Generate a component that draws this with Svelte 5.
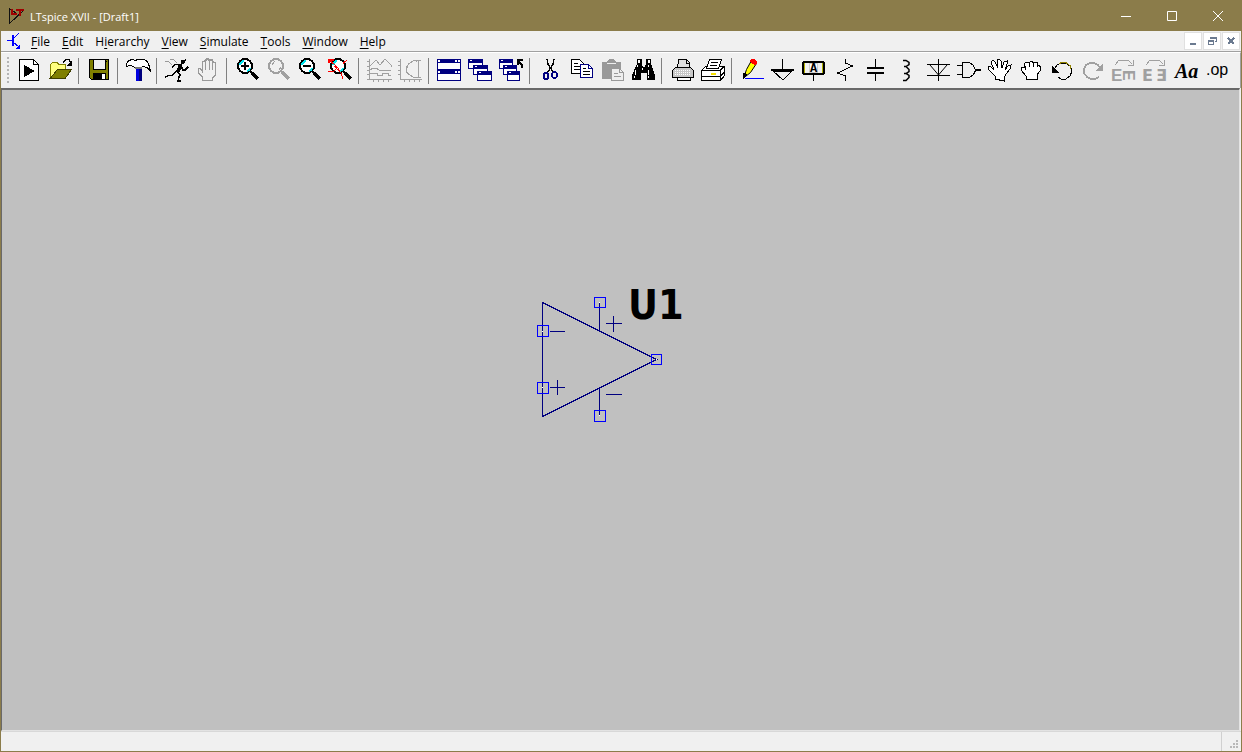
<script>
    const menus = [
        ['F', 'ile', ''],
        ['E', 'dit', ''],
        ['i', 'erarchy', 'H'],
        ['V', 'iew', ''],
        ['S', 'imulate', ''],
        ['T', 'ools', ''],
        ['W', 'indow', ''],
        ['H', 'elp', '']
    ];

    const glass = '<circle cx="13" cy="13" r="7" fill="#fff" stroke-width="2"/><path d="M8 12a5 5 0 0 1 4-4M18 15a5 5 0 0 1-3 3" stroke="#00e5ee" stroke-width="2"/><path d="m18 18 2 2" stroke-width="2"/><path d="m20 20 6 6" stroke-width="4"/>';
    const win = (x, y, w, h) =>
        `<rect x="${x}.5" y="${y}.5" width="${w}" height="${h}" fill="#fff" stroke="#000080"/><path d="M${x} ${y + 2}h${w + 1}" stroke="#000080" stroke-width="4"/><path d="M${x + 1} ${y + 2}h2M${x + w - 5} ${y + 2}h2M${x + w - 2} ${y + 2}h2" stroke="#fff" stroke-width="2"/>`;
    const smallWin = (x, y, w, h) =>
        `<rect x="${x}.5" y="${y}.5" width="${w}" height="${h}" fill="#fff" stroke="#000080"/><path d="M${x} ${y + 2}h${w + 1}" stroke="#000080" stroke-width="4"/><path d="M${x + 2} ${y + 1.5}h2" stroke="#fff"/>`;

    const icons = {
        'New schematic': '<path d="M5.500 6.500h14l5 5v16h-19z" fill="#fff"/><path d="M19.500 6.500v5h5"/><path d="m10 12 11 6-11 6z" fill="#000" stroke="none"/>',
        'Open': '<path d="M5.500 25V12l2-3h4l2 2h7v5" fill="#ffff80" stroke="#808000"/><path d="M12.500 16.500h14l-6 8.500h-15z" fill="#808000" stroke="#404000"/><path d="M18 9.500l3-3h3l2 4"/><path d="M27 7v6h-6z" fill="#000" stroke="none"/>',
        'Save': '<path d="M5.500 6.500h19v20h-17l-2-2z" fill="#808000"/><path d="M9.500 6.500h12v10h-12z" fill="#f0f0f0"/><path d="M9 20h13v7H9z" fill="#000" stroke="none"/><path d="M18 21h3v5h-3z" fill="#fff" stroke="none"/><path d="M22.500 8v1"/>',
        'Control panel': '<path d="M13 13h6v15h-6z" fill="#0000e0" stroke="none"/><path d="M17.500 13v15" stroke="#000080" stroke-width="3"/><path d="M3.500 10.500c3-5 6-4 9-3l2-1c5-1 9 0 11 4l1.500 6v1l-3-3-4-1-2 1h-6c-3-2-5-3-8-1z" fill="#fff"/><path d="M12 15h7" stroke="#777" stroke-width="2"/>',
        'Run': '<path d="M19 7h3l2-1-1 4-4 2z" fill="#000" stroke="none"/><path d="M17 11h3l-2 8h-4z" fill="#000" stroke="none"/><path d="m17 11.500-4 0-3 3M19 13l2 4 2 0 3-3M15 17l-5 5.500H7L3 24M15 18l3 4-1 2-1 4h3" stroke-width="1.500"/><path d="m8 6 4 1 3 3M3 8l4 1 3 3" stroke="#999"/>',
        'Halt': '<path d="M9.500 27.500v-3l-4-5v-4h2l2 3V9l2-1 1 1v8V8l1-2h2l1 2v9V8l1-1h2v10-7l1-1 2 1v12l-3 3v2.500z" fill="#f0f0f0" stroke="#999" stroke-width="1.500"/>',
        'Zoom in': glass + '<path d="M9 13h8M13 9v8" stroke-width="2"/>',
        'Pan': '<g stroke="#a0a0a0"><circle cx="13" cy="13" r="7" stroke-width="2"/><path d="M9 12l3-4M16 17l2-3" /><path d="M19 19l7 7" stroke-width="3"/></g>',
        'Zoom out': glass + '<path d="M9 13h8" stroke-width="2"/>',
        'Zoom to fit': glass + '<path d="M4 7l6 5 6 8 2 6M22 7l-7 6-6 5-6 1" stroke="#f00"/><path d="M3 7h6M4 6v4M10 13l4 4" stroke="#f00" stroke-width="2"/><path d="m11 17 7-7" stroke="#fff"/>',
        'Autorange': '<path d="M5.500 6v20.500h22M3 8.500h3M3 13.500h3M3 17.500h3M3 21.500h3M3 26.500h3M9.500 26v3M14.500 26v3M19.500 26v3M24.500 26v3M6 13l6-6 4 5 5-6 6 6v2M6 17l3-2h3l3 2h12M6 20.500h7v2h5v-2h6v2h3" stroke="#a0a0a0"/>',
        'FFT': '<path d="M5.500 6v20.500h21M3 8.500h3M3 12.500h3M3 17.500h3M3 21.500h3M9.500 26v3M14.500 26v3M19.500 26v3M24.500 26v3M23.500 7v18M26 7.500h-7l-5 3-3 4v4l3 3 5 3h7M21 9l2-2M13 13l-2 4 2 4" stroke="#a0a0a0"/>',
        'Tile windows': win(3, 6, 23, 10) + win(3, 17, 23, 10),
        'Cascade windows': smallWin(3, 6, 14, 9) + smallWin(8, 12, 14, 9) + smallWin(12, 18, 14, 9),
        'Close all': smallWin(3, 6, 13, 9) + smallWin(7, 12, 13, 9) + smallWin(11, 18, 12, 9) + '<path d="m22 8 4 4v3" stroke-width="1.500"/><path d="M21 6h6v2h-4v4h-2z" fill="#000" stroke="none"/>',
        'Cut': '<path d="m12 6 1 5 5 8M19 6l-1 5-5 8" stroke-width="1.500"/><g stroke="#000080" stroke-width="2"><ellipse cx="11" cy="23" rx="2.500" ry="3"/><ellipse cx="19.500" cy="22" rx="2.500" ry="3"/></g>',
        'Copy': '<path d="M5.500 6.500h8l4 4v10h-12z" fill="#fff"/><path d="M8 10.500h4M8 13.500h6M8 16.500h6"/><path d="M14.500 11.500h8l4 4v9h-12z" fill="#fff" stroke="#000080"/><path d="M22.500 11.500v4h4" stroke="#000080"/><path d="M17 15.500h3M17 18.500h7M17 21.500h7"/>',
        'Paste': '<path d="M5 9h5l2-3h5l2 3h5v17H5z" fill="#999" stroke="none"/><path d="M10 10.500h9" stroke="#eee"/><path d="M14.500 15.500h8l4 4v8h-12z" fill="#eee" stroke="#999"/><path d="M22.500 15.500v4h4M17 20.500h4M17 23.500h7" stroke="#999"/>',
        'Find': '<path d="M9 6h5v5l1 3h2l1-3V6h5v5l4 11v5h-8v-7h-6v7H4v-5l5-11z" fill="#000" stroke="none"/><path d="M10 7h2v3h-2zM20 7h2v3h-2zM9 12h1v2H9zM20 12h1v2h-1zM7 17h1v5H7zM20 17h1v5h-1zM14 15h1v2h-1zM6 23h1v2H6zM20 23h1v2h-1z" fill="#fff" stroke="none"/>',
        'Print': '<path d="m10.500 15.500 1-9h8l3 3v6" fill="#ddd"/><path d="M19.500 7v3h3"/><path d="M8.500 14.500h15l3 3v7h-21v-7z" fill="#c8c8c8"/><path d="M10.500 24.500h13v3h-13z" fill="#fff"/><path d="M8 17.500h16M8 19.500h16M8 21.500h16" stroke="#fff" stroke-dasharray="1 1"/>',
        'Print setup': '<path d="M3.500 17.500l4-4h19v9l-4 5h-19z" fill="#fff"/><path d="m8.500 15.500 3-9h12l-3 9z" fill="#fff"/><path d="M13 9.500h7M12 12.500h7"/><path d="M3 17.500h19.500v10M22 17.500l4-4M3 23.500h19.500l4-5"/><path d="M13 21h5" stroke="#f5e000" stroke-width="2"/>',
        'Draw wire': '<path d="m7.500 22.500 2-6 5-9 5 3-6 9-5 4z" fill="#ff0" shape-rendering="auto"/><path d="m14 6 3 0 3 2v3l-2 1-5-3z" fill="#f00" stroke="none"/><path d="M6 20h3l1 2-4 4z" fill="#000" stroke="none"/><path d="M8 25.500h19" stroke="#00f"/>',
        'Ground': '<path d="M14.500 6v11M15 27 5 18h19z"/><path d="M3 17h23" stroke-width="2"/>',
        'Label net': '<rect x="4" y="9" width="21" height="12" rx="2" stroke-width="2" fill="#f0f0f0"/><path d="M5.500 10v10M23.500 10v10" stroke="#b0b000"/><path d="M10.500 10.500h8v9h-8z" stroke="#ccc" fill="#fff"/><path d="M14.500 22v6"/><text x="14.500" y="19" font-family="Liberation Mono" font-weight="bold" font-size="12" text-anchor="middle" fill="#000" stroke="none">A</text>',
        'Resistor': '<path d="M15.500 6v4l7 3-15 7 8 3v5"/>',
        'Capacitor': '<path d="M14.500 6v9M14.500 21v7"/><path d="M6 15h17M6 20h17" stroke-width="2"/>',
        'Inductor': '<path d="M11 7.500h3l3 2v2l-3 2h-2 2l3 3v2l-3 2h-2 2l3 2v2l-3 3h-3" stroke-width="1.500" shape-rendering="auto"/>',
        'Diode': '<path d="M15.500 6v22M4 11.500h23M4 22.500h23"/><path d="M7 12l8.500 10L24 12" shape-rendering="auto"/>',
        'Component': '<path d="M3 12.500h5M3 21.500h5M8.500 9.500h7l4 3 2 5-2 4-4 3h-7z" fill="#f0f0f0"/><path d="M21 17h6" stroke-width="2"/>',
        'Move': '<path d="M10 26v-3l-6-6-1-3 2-1 4 4-3-8 2-2 2 2 3 6-1-8 2-1 2 2 1 7 2-6 3-1v3l-2 6 3-4 3-1-1 4-4 5-2 4v3z" fill="#fff"/>',
        'Drag': '<path d="M10 26v-3l-5-6 1-3h3l-1-3 2-2 3 1 2-2 3 2 3-1 1 3 3 2-1 4-3 4v4z" fill="#fff"/><path d="M9 13v4M13 10v4M17 10v4M21 11v3"/>',
        'Undo': '<path d="M8 15l2-3 4-2h5l4 3 2 5-2 5-4 3h-5l-3-2"/><path d="m12 10.500 3-1h4l4 3 1 3" stroke="#908000"/><path d="M5 12v8h7z" fill="#000" stroke="none"/>',
        'Redo': '<path d="M22 15l-2-3-4-2h-4l-4 2-2 4v4l3 4 4 2h4l4-2" stroke="#a0a0a0" stroke-width="1.500"/><path d="M25 10v8h-8z" fill="#a0a0a0" stroke="none"/>',
        'Rotate': '<g fill="#a0a0a0" stroke="none" font-family="Liberation Sans" font-weight="bold" font-size="17"><text x="2" y="28">E</text><text transform="translate(14 17) rotate(90)" x="0" y="0" font-size="16">E</text></g><path d="M6 12l4-5h9l4 4M24.500 7v5H19" stroke="#a0a0a0"/>',
        'Mirror': '<g fill="#a0a0a0" stroke="none" font-family="DejaVu Sans" font-weight="bold" font-size="16"><text x="2" y="28">E</text><text x="16" y="28">Ǝ</text></g><path d="M6 12l4-5h9l4 4M24.500 7v5H19" stroke="#a0a0a0"/>',
        'Text': '<text x="4" y="25" font-family="Liberation Serif" font-weight="bold" font-style="italic" font-size="20" fill="#000" stroke="none">Aa</text>',
        'SPICE directive': '<text x="4" y="22" font-family="Liberation Sans" font-size="16" fill="#000" stroke="none">.op</text>'
    };

    const groups = [
        ['New schematic', 'Open'],
        ['Save'],
        ['Control panel'],
        ['Run', 'Halt'],
        ['Zoom in', 'Pan', 'Zoom out', 'Zoom to fit'],
        ['Autorange', 'FFT'],
        ['Tile windows', 'Cascade windows', 'Close all'],
        ['Cut', 'Copy', 'Paste', 'Find'],
        ['Print', 'Print setup'],
        ['Draw wire', 'Ground', 'Label net', 'Resistor', 'Capacitor', 'Inductor', 'Diode', 'Component',
            'Move', 'Drag', 'Undo', 'Redo', 'Rotate', 'Mirror', 'Text', 'SPICE directive']
    ];
    const disabled = ['Halt', 'Pan', 'Autorange', 'FFT', 'Paste', 'Redo', 'Rotate', 'Mirror'];
</script>

<div class="window">
    <header class="titlebar">
        <svg class="logo" width="16" height="18" viewBox="0 0 16 18">
            <path d="M.5 1v15.500L15 3M0 1.500l8 5" stroke="#111" fill="none" />
            <path d="M3 2v5h5M7 2.500h8M11 3v6" stroke="#a00000" stroke-width="2" fill="none" />
        </svg>
        <span class="title">LTspice XVII - [Draft1]</span>
        <button class="caption" aria-label="Minimize">
            <svg width="12" height="12"><path d="M1 6.500h10" /></svg>
        </button>
        <button class="caption" aria-label="Maximize">
            <svg width="12" height="12"><path d="M1.500 1.500h9v9h-9z" /></svg>
        </button>
        <button class="caption" aria-label="Close">
            <svg width="12" height="12"><path d="m1 1 10 10M11 1 1 11" /></svg>
        </button>
    </header>

    <nav class="menubar">
        <svg class="docicon" width="14" height="18" viewBox="0 0 14 18">
            <path d="M0 8.500h5M12 1 6 7M6 10l6 5" stroke="#00f" fill="none" />
            <path d="M5 3h2v11H5zM13 12v5H8z" fill="#00f" />
        </svg>
        {#each menus as [key, rest, before]}
            <button class="menu">{before}<u>{key}</u>{rest}</button>
        {/each}
        <div class="mdi">
            <button aria-label="Minimize document"><svg width="10" height="10"><path d="M2 8h6" stroke-width="2" /></svg></button>
            <button aria-label="Restore document"><svg width="10" height="10"><path d="M3.500 3V1.500h6v4H8M3 2h7M1.500 4.500h5v4h-5zM1 5h6" /></svg></button>
            <button aria-label="Close document"><svg width="10" height="10"><path d="m2 2 6 6M8 2 2 8" stroke-width="2" /></svg></button>
        </div>
    </nav>

    <div class="toolbar">
        <div class="grip"></div>
        {#each groups as group, i}
            {#if i > 0}<div class="sep"></div>{/if}
            {#each group as name}
                <button class="tool" aria-label={name} disabled={disabled.includes(name)}>
                    <svg width="31" height="35" viewBox="0 0 31 35" fill="none" stroke="#000">{@html icons[name]}</svg>
                </button>
            {/each}
        {/each}
    </div>

    <main class="sheet">
        <svg class="opamp" width="160" height="150" viewBox="530 280 160 150" fill="none">
            <g stroke="#000080">
                <path d="M542.500 302.500v114l114-57z" />
                <path d="M599.500 302v29M599.500 388v28" />
                <path d="M550 331.500h15M550 387.500h15M557.500 380v15" />
                <path d="M606 323.500h16M613.500 316v16M606 394.500h16" />
            </g>
            <g stroke="#00f">
                <rect x="537.500" y="325.500" width="11" height="11" />
                <rect x="537.500" y="382.500" width="11" height="11" />
                <rect x="594.500" y="297.500" width="11" height="10" />
                <rect x="594.500" y="410.500" width="11" height="11" />
                <rect x="651.500" y="354.500" width="10" height="10" />
            </g>
            <path d="M542 331.500h1M542 387.500h1M599 302.500h1M599 415.500h1M656 359.500h1" stroke="#fff" />
            <text x="628" y="319">U1</text>
        </svg>
    </main>

    <footer class="status">
        <div class="pane"></div>
        <svg class="sizer" width="19" height="18" viewBox="0 0 19 18">
            <path d="M14 8h2v2h-2zM14 11h2v2h-2zM11 11h2v2h-2zM14 14h2v2h-2zM11 14h2v2h-2zM8 14h2v2H8z" fill="#b8b8b8" />
        </svg>
    </footer>
</div>

<style>
    .window {
        box-sizing: border-box;
        display: flex;
        flex-direction: column;
        height: 100vh;
        border: 1px solid #8b7c4a;
        background-color: #f0f0f0;
        color: #000;
        font-family: "Open Sans", "Noto Sans", sans-serif;
        font-size: 12px;
    }

    svg {
        display: block;
        shape-rendering: crispEdges;
    }

    button {
        display: flex;
        align-items: center;
        justify-content: center;
        padding: 0;
        border: 0;
        background: none;
        color: inherit;
        font: inherit;
    }

    .titlebar {
        display: flex;
        height: 30px;
        background-color: #8b7c4a;
        color: #fff;
        align-items: center;
    }

    .logo {
        margin-left: 8px;
        margin-right: 5px;
    }

    .title {
        flex: 1;
        font-size: 11px;
    }

    .caption {
        width: 46px;
        height: 29px;
    }

    .caption svg {
        fill: none;
        stroke: #fff;
        shape-rendering: auto;
    }

    .menubar {
        display: flex;
        height: 20px;
        align-items: center;
        border-bottom: 1px solid #a0a0a0;
    }

    .docicon {
        margin-left: 6px;
        margin-right: 4px;
    }

    .menu {
        padding: 0 6px;
        white-space: pre;
    }

    u {
        text-underline-offset: 2px;
    }

    .mdi {
        display: flex;
        gap: 1px;
        margin-left: auto;
        margin-right: 1px;
    }

    .mdi button {
        box-sizing: border-box;
        width: 18px;
        height: 18px;
        border: 1px solid #e0e0e0;
        background-color: #fff;
    }

    .mdi svg {
        fill: none;
        stroke: #6b7a90;
    }

    .toolbar {
        display: flex;
        height: 35px;
        border-top: 1px solid #fff;
        border-right: 1px solid #a0a0a0;
        overflow: hidden;
    }

    .grip {
        flex: none;
        width: 2px;
        height: 28px;
        margin: 4px 5px 0 6px;
        background: repeating-linear-gradient(#b4b4b4 0 2px, transparent 2px 4px);
    }

    .tool {
        flex: none;
        width: 31px;
        height: 35px;
    }

    .sep {
        flex: none;
        box-sizing: border-box;
        width: 8px;
        height: 26px;
        margin-top: 5px;
        border-left: 2px solid transparent;
        background: linear-gradient(#808080, #808080) no-repeat 0 0 / 1px 100%;
    }

    .sheet {
        position: relative;
        flex: 1;
        margin-right: 1px;
        border: 1px solid #e3e3e3;
        border-top: 2px solid #696969;
        border-left-color: #696969;
        background-color: #c0c0c0;
    }

    .opamp {
        position: absolute;
        left: 528px;
        top: 190px;
    }

    .opamp text {
        fill: #000;
        font-family: "DejaVu Sans Condensed", "DejaVu Sans", sans-serif;
        font-size: 41px;
        font-weight: bold;
    }

    .status {
        display: flex;
        height: 19px;
        border-top: 1px solid #d8d8d8;
    }

    .pane {
        flex: 1;
        border-right: 1px solid #d0d0d0;
    }
</style>
